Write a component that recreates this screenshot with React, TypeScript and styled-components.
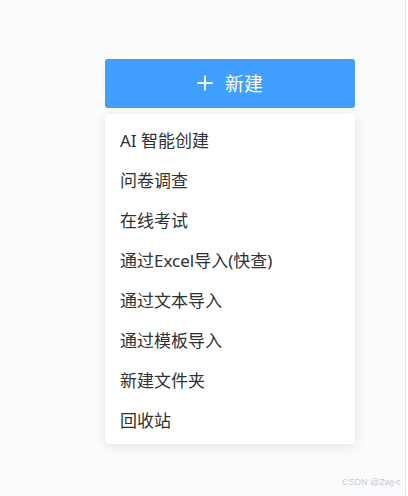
import React from "react";
import styled, { createGlobalStyle } from "styled-components";

const Global = createGlobalStyle`
  html, body { margin: 0; padding: 0; background: #ffffff; }
  body { font-family: "Noto Sans", "Noto Sans CJK SC", sans-serif; }
  * { box-sizing: border-box; }
`;

const Frame = styled.div`
  position: relative;
  width: 406px;
  height: 496px;
  background: #fafbfc;
  border-right: 1px solid #e3e4e6;
  padding: 59px 0 0 105px;
`;

const Column = styled.div`
  width: 250px;
  display: flex;
  flex-direction: column;
  gap: 6px;
`;

const CreateButton = styled.button`
  height: 49px;
  width: 100%;
  border: none;
  border-radius: 3px;
  background: #409eff;
  color: #ffffff;
  display: flex;
  align-items: center;
  justify-content: center;
  gap: 12px;
  font-family: "Noto Sans CJK SC", sans-serif;
  font-size: 19px;
  padding: 0 0 2px 0;
  cursor: pointer;
`;

const Menu = styled.ul`
  list-style: none;
  margin: 0;
  padding: 5px 0;
  background: #ffffff;
  border-radius: 4px;
  box-shadow: 0 2px 12px rgba(0, 0, 0, 0.1);
`;

const Item = styled.li`
  height: 40px;
  display: flex;
  align-items: center;
  padding: 0 15px;
  font-family: "Noto Sans", "Noto Sans CJK SC", sans-serif;
  font-size: 17px;
  color: #303133;
`;

const Watermark = styled.div`
  position: absolute;
  left: 342px;
  top: 477px;
  font-family: "Liberation Sans", sans-serif;
  font-size: 9px;
  color: #c8c9cc;
  white-space: nowrap;
`;

const items = [
  "AI 智能创建",
  "问卷调查",
  "在线考试",
  "通过Excel导入(快查)",
  "通过文本导入",
  "通过模板导入",
  "新建文件夹",
  "回收站",
];

export default function App() {
  return (
    <>
      <Global />
      <Frame>
        <Column>
          <CreateButton>
            <svg width="16" height="16" viewBox="0 0 16 16" aria-hidden>
              <path d="M8 0.5V15.5M0.5 8H15.5" stroke="#fff" strokeWidth="1.8" fill="none" />
            </svg>
            <span>新建</span>
          </CreateButton>
          <Menu>
            {items.map((t) => (
              <Item key={t}>{t}</Item>
            ))}
          </Menu>
        </Column>
        <Watermark>CSDN @Zwj-c</Watermark>
      </Frame>
    </>
  );
}
